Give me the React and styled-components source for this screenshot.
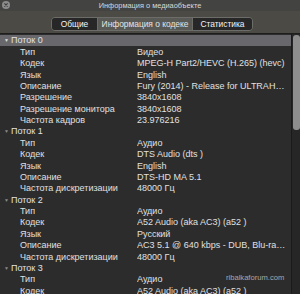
import React from 'react'
import styled, { createGlobalStyle } from 'styled-components'

const streams = [
  {
    name: 'Поток 0',
    rows: [
      ['Тип', 'Видео'],
      ['Кодек', 'MPEG-H Part2/HEVC (H.265) (hevc)'],
      ['Язык', 'English'],
      ['Описание', 'Fury (2014) - Release for ULTRAHD Blu-ray'],
      ['Разрешение', '3840x1608'],
      ['Разрешение монитора', '3840x1608'],
      ['Частота кадров', '23.976216'],
    ],
  },
  {
    name: 'Поток 1',
    rows: [
      ['Тип', 'Аудио'],
      ['Кодек', 'DTS Audio (dts )'],
      ['Язык', 'English'],
      ['Описание', 'DTS-HD MA 5.1'],
      ['Частота дискретизации', '48000 Гц'],
    ],
  },
  {
    name: 'Поток 2',
    rows: [
      ['Тип', 'Аудио'],
      ['Кодек', 'A52 Audio (aka AC3) (a52 )'],
      ['Язык', 'Русский'],
      ['Описание', 'AC3 5.1 @ 640 kbps - DUB, Blu-ray CEE'],
      ['Частота дискретизации', '48000 Гц'],
    ],
  },
  {
    name: 'Поток 3',
    rows: [
      ['Тип', 'Аудио'],
      ['Кодек', 'A52 Audio (aka AC3) (a52 )'],
      ['Язык', 'Русский'],
    ],
  },
]

const tabs = ['Общие', 'Информация о кодеке', 'Статистика']

function App() {
  return (
    <Window>
      <GlobalStyle />
      <TitleBar>
        <CloseButton>
          <svg width="8" height="8" viewBox="0 0 8 8">
            <circle cx="4" cy="4" r="4" fill="#8c8c8c" />
            <path d="M2.4 2.4 L5.6 5.6 M5.6 2.4 L2.4 5.6" stroke="#3c3c3c" strokeWidth="1.1" />
          </svg>
        </CloseButton>
        <Title>Информация о медиаобъекте</Title>
      </TitleBar>
      <Toolbar>
        <Segments>
          {tabs.map((t, i) => (
            <Segment key={t} active={i === 1} w={[45, 94, 59][i]}>{t}</Segment>
          ))}
        </Segments>
      </Toolbar>
      <Body>
        <List>
          {streams.map((s, si) => (
            <React.Fragment key={s.name}>
              <Header selected={si === 0}>
                <Arrow selected={si === 0}>▼</Arrow>
                {s.name}
              </Header>
              {s.rows.map(([k, v], ri) => (
                <Row key={ri}>
                  <Label>{k}</Label>
                  <Value>{v}</Value>
                </Row>
              ))}
            </React.Fragment>
          ))}
        </List>
        <Scrollbar>
          <Thumb />
        </Scrollbar>
        <Watermark>ribalkaforum.com</Watermark>
      </Body>
    </Window>
  )
}

export default App

const GlobalStyle = createGlobalStyle`
  html, body { margin: 0; padding: 0; background: #2c2c2c; }
  body { font-family: "Liberation Sans", Arial, sans-serif; }
`

const Window = styled.div`
  width: 300px;
  height: 294px;
  overflow: hidden;
  display: flex;
  flex-direction: column;
  background: #2c2c2c;
`

const TitleBar = styled.div`
  height: 11px;
  position: relative;
  display: flex;
  align-items: center;
  justify-content: center;
  background: #434341;
`

const CloseButton = styled.div`
  position: absolute;
  left: 2px;
  top: 1px;
  width: 8px;
  height: 8px;
  display: flex;
`

const Title = styled.div`
  color: #d8d8d8;
  font-size: 7.4px;
  line-height: 11px;
  margin-top: -1px;
`

const Toolbar = styled.div`
  height: 23px;
  background: #4b4a45;
  border-bottom: 1px solid #1e1e1e;
  display: flex;
  align-items: flex-start;
  padding: 6px 0 0 51px;
  box-sizing: border-box;
`

const Segments = styled.div`
  display: flex;
  height: 14px;
  border: 1px solid #6c6c68;
  border-radius: 4px;
  overflow: hidden;
  box-sizing: border-box;
`

const Segment = styled.div`
  width: ${p => p.w}px;
  display: flex;
  align-items: center;
  justify-content: center;
  font-size: 8.4px;
  color: ${p => (p.active ? '#e4e4e4' : '#f4f4f4')};
  background: ${p => (p.active ? '#595955' : '#272727')};
  border-left: 1px solid #6c6c68;
  &:first-child { border-left: none; }
`

const Body = styled.div`
  position: relative;
  flex: 1;
  display: flex;
  overflow: hidden;
`

const List = styled.div`
  flex: 1;
  min-width: 0;
  display: flex;
  flex-direction: column;
  padding-top: 0.8px;
`

const Header = styled.div`
  height: 11.375px;
  flex-shrink: 0;
  display: flex;
  align-items: center;
  padding-left: 4px;
  font-size: 9px;
  color: #e2e2e2;
  background: ${p => (p.selected ? '#67676c' : 'transparent')};
`

const Arrow = styled.span`
  font-size: 5px;
  margin-right: 2px;
  color: ${p => (p.selected ? '#dcdcdc' : '#8a8a8a')};
`

const Row = styled.div`
  height: 11.375px;
  flex-shrink: 0;
  display: grid;
  grid-template-columns: 137px minmax(0, 1fr);
  align-items: center;
  font-size: 9px;
  color: #e0e0e0;
`

const Label = styled.div`
  padding-left: 20px;
  white-space: nowrap;
`

const Value = styled.div`
  white-space: nowrap;
  overflow: hidden;
  text-overflow: ellipsis;
  padding-right: 2px;
`

const Scrollbar = styled.div`
  width: 8px;
  flex-shrink: 0;
  background: #262626;
  border-left: 1px solid #1a1a1a;
  position: relative;
`

const Thumb = styled.div`
  position: absolute;
  left: 1px;
  right: 0;
  top: 1px;
  height: 95px;
  border-radius: 3px;
  background: #8d8d8d;
`

const Watermark = styled.div`
  position: absolute;
  left: 226px;
  top: 239px;
  font-size: 7.6px;
  color: #a8a8a8;
`
